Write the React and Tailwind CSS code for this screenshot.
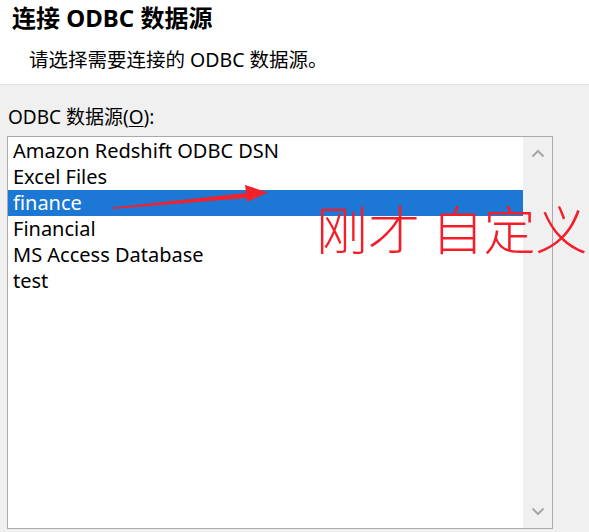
import React from 'react';

const sources = [
    'Amazon Redshift ODBC DSN',
    'Excel Files',
    'finance',
    'Financial',
    'MS Access Database',
    'test',
];

const App = () => {
    return (
        <div className="relative w-[589px] h-[532px] overflow-hidden bg-[#f0f0f0] text-black font-['Noto_Sans','Noto_Sans_CJK_SC',sans-serif]">
            {/* Header */}
            <div className="h-[85px] bg-white border-b border-[#e3e3e3] pl-[12px] pt-[2px]">
                <div className="text-[24px] leading-[32px] font-bold">连接 ODBC 数据源</div>
                <div className="pl-[17px] mt-[13px] text-[19.5px] leading-[26px]">请选择需要连接的 ODBC 数据源。</div>
            </div>

            {/* Body */}
            <div className="pl-[7px] pt-[19px]">
                <div className="pl-[1px] text-[19px] leading-[26px]">
                    ODBC 数据源(<span className="underline underline-offset-2">O</span>):
                </div>
                <div className="mt-[6px] w-[546px] h-[393px] flex border border-[#a9a9a9]">
                    <div className="flex-1 bg-white pt-[1px]">
                        {sources.map((name) => (
                            <div
                                key={name}
                                className={`h-[26px] pl-[5px] text-[20px] leading-[26px] whitespace-nowrap ${
                                    name === 'finance' ? 'bg-[#1c78d4] text-white' : ''
                                }`}
                            >
                                {name}
                            </div>
                        ))}
                    </div>
                    <div className="w-[29px] bg-[#f0f0f0] flex flex-col items-center justify-between py-[12px]">
                        <svg width="14" height="9" viewBox="0 0 14 9">
                            <path d="M1.5 7.5 L7 2 L12.5 7.5" fill="none" stroke="#a6a6a6" strokeWidth="2" />
                        </svg>
                        <svg width="14" height="9" viewBox="0 0 14 9">
                            <path d="M1.5 1.5 L7 7 L12.5 1.5" fill="none" stroke="#a6a6a6" strokeWidth="2" />
                        </svg>
                    </div>
                </div>
            </div>

            {/* Annotation */}
            <svg className="absolute left-0 top-0" width="589" height="532" viewBox="0 0 589 532">
                <path d="M112 207.5 L246 193 L245 185 L268 192.5 L247 202 L247 198 L112 209 Z" fill="#f2222c" />
            </svg>
            <div className="absolute left-[316px] top-[193px] text-[52px] leading-[70px] font-light text-[#f41d28] whitespace-nowrap font-['Noto_Sans_CJK_SC',sans-serif]">
                刚才 自定义
            </div>
        </div>
    );
};

export default App;
